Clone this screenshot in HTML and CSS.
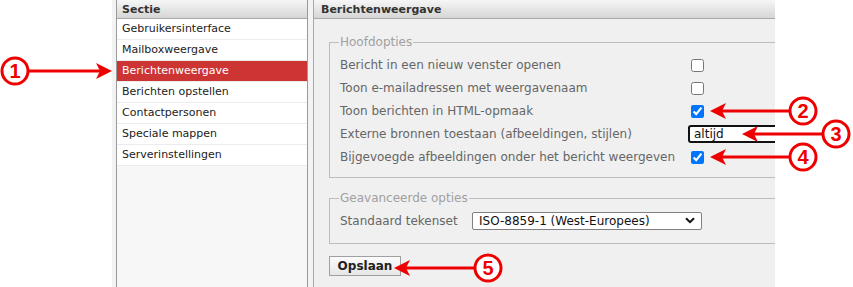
FILE: index.html
```html
<!DOCTYPE html>
<html lang="nl">
  <head>
    <meta charset="UTF-8" />
    <meta name="viewport" content="width=device-width, initial-scale=1.0" />
    <title>Instellingen - Berichtenweergave</title>
    <link rel="stylesheet" href="styles.css">
  </head>
  <body>
    <div class="app">
      <div class="sidebar">
        <div class="panel-head">Sectie</div>
        <ul class="sections">
          <li>Gebruikersinterface</li>
          <li>Mailboxweergave</li>
          <li class="selected">Berichtenweergave</li>
          <li>Berichten opstellen</li>
          <li>Contactpersonen</li>
          <li>Speciale mappen</li>
          <li>Serverinstellingen</li>
        </ul>
      </div>

      <div class="main">
        <div class="panel-head">Berichtenweergave</div>
        <div class="main-body">
          <fieldset class="main-opts">
            <legend>Hoofdopties</legend>
            <table class="props">
              <tr>
                <td class="title">Bericht in een nieuw venster openen</td>
                <td><input type="checkbox" /></td>
              </tr>
              <tr>
                <td class="title">Toon e-mailadressen met weergavenaam</td>
                <td><input type="checkbox" /></td>
              </tr>
              <tr>
                <td class="title">Toon berichten in HTML-opmaak</td>
                <td><input type="checkbox" checked /></td>
              </tr>
              <tr>
                <td class="title">Externe bronnen toestaan (afbeeldingen, stijlen)</td>
                <td><input type="text" class="text-field" value="altijd" /></td>
              </tr>
              <tr>
                <td class="title">Bijgevoegde afbeeldingen onder het bericht weergeven</td>
                <td><input type="checkbox" checked /></td>
              </tr>
            </table>
          </fieldset>

          <fieldset class="adv-opts">
            <legend>Geavanceerde opties</legend>
            <table class="props">
              <tr>
                <td class="title">Standaard tekenset</td>
                <td>
                  <div class="select">
                    <span>ISO-8859-1 (West-Europees)</span>
                    <svg width="10" height="7" viewBox="0 0 10 7"><path d="M1 1.2 L5 5.2 L9 1.2" fill="none" stroke="#111" stroke-width="2"/></svg>
                  </div>
                </td>
              </tr>
            </table>
          </fieldset>

          <button class="button">Opslaan</button>
        </div>
      </div>
    </div>

    <!-- genummerde aanwijzingen -->
    <svg class="callouts" width="853" height="287" viewBox="0 0 853 287">
      <g fill="#fff" stroke="#ee0000" stroke-width="3">
        <circle cx="15" cy="71" r="13" />
        <circle cx="803" cy="111" r="13" />
        <circle cx="836" cy="134" r="13" />
        <circle cx="803" cy="157" r="13" />
        <circle cx="488" cy="268" r="13" />
      </g>
      <g stroke="#ee0000" stroke-width="3">
        <line x1="29" y1="71" x2="101" y2="71" />
        <line x1="789" y1="111" x2="722" y2="111" />
        <line x1="822" y1="134" x2="754" y2="134" />
        <line x1="789" y1="157" x2="722" y2="157" />
        <line x1="474" y1="268" x2="406" y2="268" />
      </g>
      <g fill="#ee0000">
        <polygon points="112,71 96,63 100,71 96,79" />
        <polygon points="710,111 726,103 722,111 726,119" />
        <polygon points="742,134 758,126 754,134 758,142" />
        <polygon points="710,157 726,149 722,157 726,165" />
        <polygon points="394,268 410,260 406,268 410,276" />
      </g>
      <g class="callout-num" fill="#ee0000" text-anchor="middle">
        <text x="15" y="78">1</text>
        <text x="803" y="118">2</text>
        <text x="836" y="141">3</text>
        <text x="803" y="164">4</text>
        <text x="488" y="275">5</text>
      </g>
    </svg>
  </body>
</html>
```

FILE: styles.css
```css
body {
  margin: 0;
  background-color: white;
  font-family: "DejaVu Sans", Verdana, sans-serif;
  color: #333;
}
.app {
  display: flex;
  height: 287px;
  width: 663px;
  margin-left: 112px;
  padding-left: 4px;
  box-sizing: border-box;
  background-color: #f3f3f3;
}
.panel-head {
  height: 18px;
  line-height: 19px;
  padding-left: 5px;
  font-size: 11px;
  font-weight: bold;
  color: #333;
  background: linear-gradient(#f6f6f6, #d6d6d6);
  border-bottom: 1px solid #a8a8a8;
}
.sidebar {
  width: 190px;
  border-left: 1px solid #9a9a9a;
  border-right: 1px solid #9a9a9a;
  background-color: #f7f7f7;
}
.sections {
  list-style: none;
  margin: 0;
  padding: 0;
}
.sections li {
  height: 20px;
  line-height: 20px;
  padding-left: 5px;
  font-size: 11px;
  color: #222;
  background-color: white;
  border-bottom: 1px solid #ececec;
}
.sections li.selected {
  background-color: #cd3535;
  color: white;
}
.main {
  flex: 1;
  margin-left: 5px;
  border-left: 1px solid #a8a8a8;
  background-color: #f0f0f0;
  overflow: hidden;
}
.main .panel-head {
  padding-left: 7px;
}
.main-body {
  padding: 15px 0 0 15px;
}
fieldset {
  width: 480px;
  margin: 0;
  padding: 3px 0 9px 10px;
  border: 1px solid #bdbdbd;
}
legend {
  padding: 0 1px;
  margin-left: -1px;
  line-height: 16px;
  font-size: 12px;
  color: #a0a0a0;
}
.adv-opts {
  margin-top: 12px;
  padding: 3px 0 11px 10px;
}
.props {
  border-spacing: 0;
}
.props td {
  height: 23px;
  padding: 0;
  font-size: 12px;
  color: #666;
  vertical-align: middle;
}
.main-opts .title {
  width: 347px;
}
.adv-opts .title {
  width: 132px;
}
.props input[type="checkbox"] {
  margin: 0 0 0 4px;
  width: 13px;
  height: 13px;
  vertical-align: middle;
}
.text-field {
  width: 120px;
  height: 18px;
  margin-left: 1px;
  box-sizing: border-box;
  padding: 0 4px;
  border: 2px solid #111;
  border-radius: 3px;
  font-family: "DejaVu Sans", Verdana, sans-serif;
  font-size: 12px;
  color: #111;
  vertical-align: middle;
}
.select {
  display: flex;
  align-items: center;
  justify-content: space-between;
  width: 230px;
  height: 18px;
  box-sizing: border-box;
  padding: 0 6px 0 6px;
  background-color: white;
  border: 1px solid #808080;
  border-radius: 2px;
  font-size: 12px;
  color: #111;
}
.button {
  margin-top: 12px;
  height: 20px;
  width: 72px;
  padding: 0;
  font-family: "DejaVu Sans", Verdana, sans-serif;
  font-size: 12px;
  font-weight: bold;
  color: #222;
  background: linear-gradient(#fbfbfb, #e6e6e6);
  border: 1px solid #a0a0a0;
  border-radius: 0;
}
.callouts {
  position: absolute;
  left: 0;
  top: 0;
  pointer-events: none;
}
.callout-num {
  font-family: "Liberation Sans", Arial, sans-serif;
  font-size: 20px;
  font-weight: bold;
}
```
